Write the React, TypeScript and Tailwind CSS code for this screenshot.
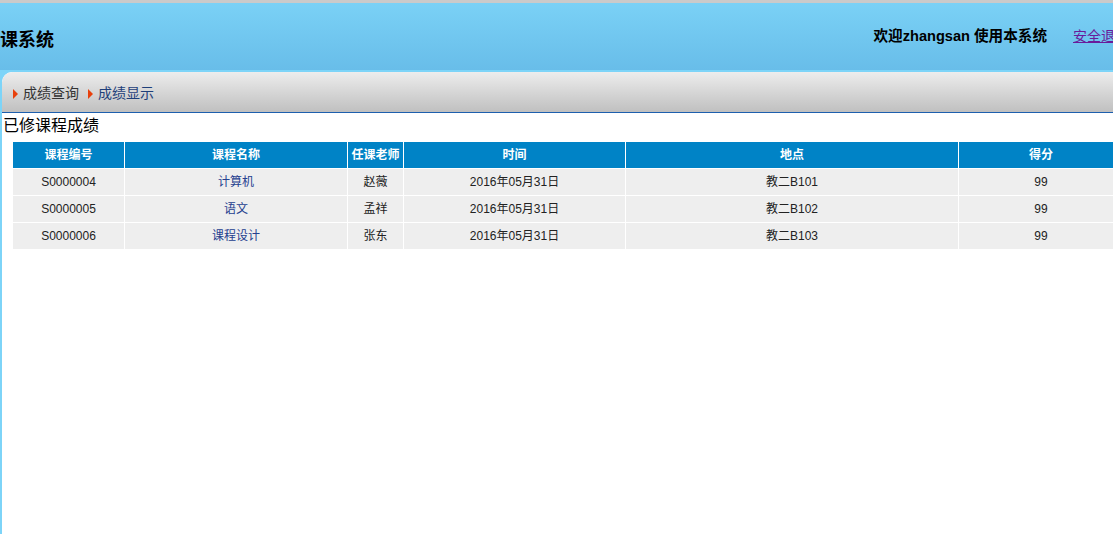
import React from 'react';

const rows = [
  { id: 'S0000004', name: '计算机', teacher: '赵薇', time: '2016年05月31日', place: '教二B101', score: '99' },
  { id: 'S0000005', name: '语文', teacher: '孟祥', time: '2016年05月31日', place: '教二B102', score: '99' },
  { id: 'S0000006', name: '课程设计', teacher: '张东', time: '2016年05月31日', place: '教二B103', score: '99' },
];

function Arrow() {
  return <span className="inline-block w-0 h-0 border-y-[5px] border-y-transparent border-l-[5px] border-l-[#e8400c] mr-[5px]" />;
}

function App() {
  return (
    <div className="w-[1113px] h-[534px] overflow-hidden bg-white flex flex-col font-['Liberation_Sans','Noto_Sans_CJK_SC',sans-serif]">
      <div className="h-[3px] bg-[#cacaca]" />
      <header className="h-[67px] bg-gradient-to-b from-[#7ad1f6] to-[#68bde9] flex items-center justify-between pt-[7px] whitespace-nowrap">
        <h1 className="text-[18px] font-bold text-black">课系统</h1>
        <div className="flex items-center font-bold text-black mb-[6px]">
          <span className="text-[14.6px]">欢迎zhangsan 使用本系统</span>
          <a href="#" className="ml-[26px] text-[14px] font-normal text-[#6a1b9a] underline w-[40px] overflow-hidden">安全退出</a>
        </div>
      </header>
      <div className="flex-1 flex flex-col bg-[#7dd4f8] pl-[2px] pt-[2px]">
        <div className="flex-1 bg-white rounded-tl-[10px] overflow-hidden">
          <div className="h-[41px] bg-gradient-to-b from-[#ededed] to-[#c0c0c0] border-b border-[#1d5fae] flex items-center pl-[11px] pt-[3px] text-[14px] rounded-tl-[10px]">
            <Arrow />
            <span className="text-[#333]">成绩查询</span>
            <span className="ml-[9px]" />
            <Arrow />
            <span className="text-[#1e3f7a]">成绩显示</span>
          </div>
          <div className="pl-[1px] pt-[2px] text-[16px] leading-[22px] text-black">已修课程成绩</div>
          <table className="ml-[10px] mt-[4px] border-collapse table-fixed w-[1111px] text-[12px] text-center whitespace-nowrap">
            <colgroup>
              <col className="w-[112px]" />
              <col className="w-[223px]" />
              <col className="w-[56px]" />
              <col className="w-[222px]" />
              <col className="w-[333px]" />
              <col className="w-[165px]" />
            </colgroup>
            <thead>
              <tr className="bg-[#0083c6] text-white font-bold h-[27px]">
                <th className="border border-white">课程编号</th>
                <th className="border border-white">课程名称</th>
                <th className="border border-white">任课老师</th>
                <th className="border border-white">时间</th>
                <th className="border border-white">地点</th>
                <th className="border border-white">得分</th>
              </tr>
            </thead>
            <tbody>
              {rows.map((r) => (
                <tr key={r.id} className="bg-[#eeeeee] text-[#222] h-[27px]">
                  <td className="border border-white">{r.id}</td>
                  <td className="border border-white text-[#25408f]">{r.name}</td>
                  <td className="border border-white">{r.teacher}</td>
                  <td className="border border-white">{r.time}</td>
                  <td className="border border-white">{r.place}</td>
                  <td className="border border-white">{r.score}</td>
                </tr>
              ))}
            </tbody>
          </table>
        </div>
      </div>
    </div>
  );
}

export default App;
